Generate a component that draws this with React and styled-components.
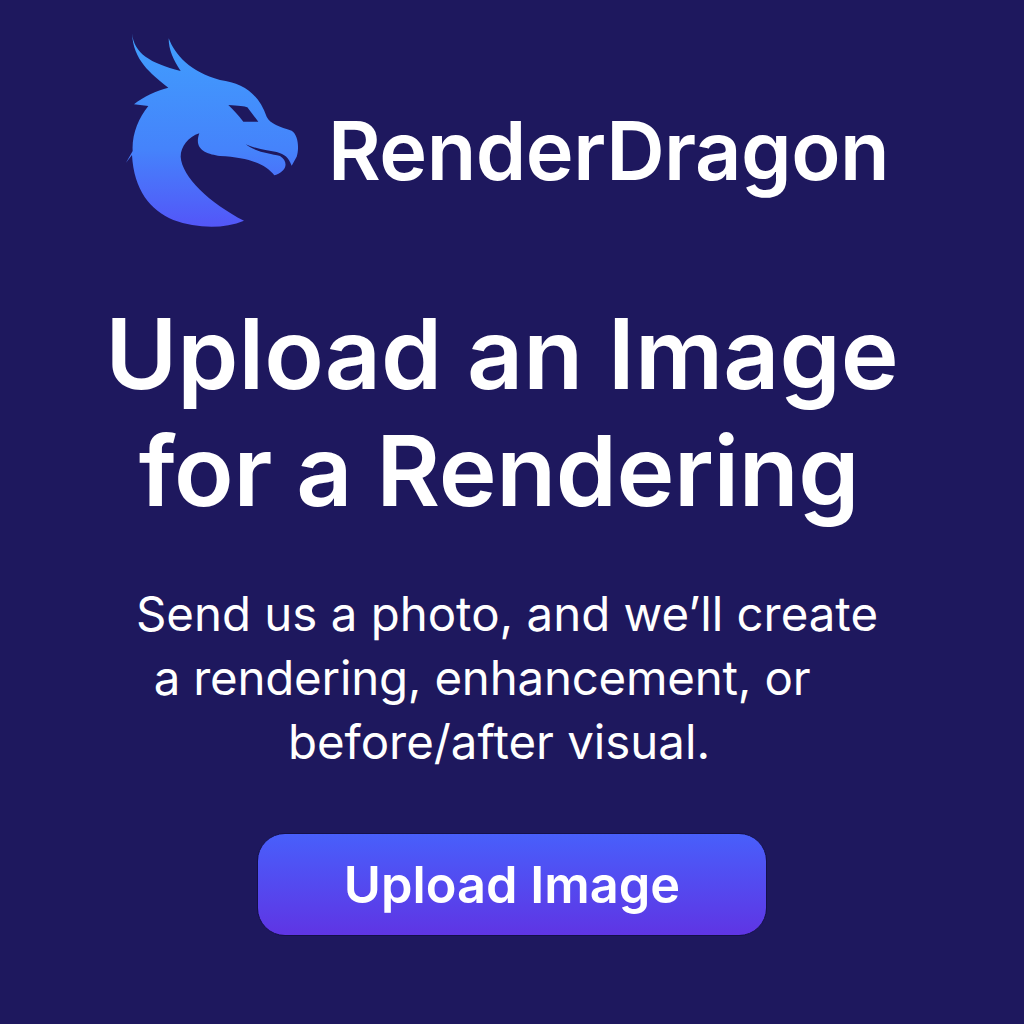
import React from 'react';
import styled, { createGlobalStyle } from 'styled-components';

const GlobalStyle = createGlobalStyle`
  html, body {
    margin: 0;
    background: #1e185e;
  }
`;

const Page = styled.main`
  align-items: center;
  background: #1e185e;
  color: #ffffff;
  display: flex;
  flex-direction: column;
  font-family: Inter, "Liberation Sans", sans-serif;
  height: 1024px;
  overflow: hidden;
  width: 1024px;
`;

const Brand = styled.header`
  align-items: center;
  align-self: flex-start;
  display: flex;
  gap: 8px;
  padding: 20px 0 0 110px;
`;

const BrandName = styled.span`
  font-size: 81px;
  font-weight: 600;
  letter-spacing: -0.5px;
  line-height: 90px;
  margin-top: 42px;
`;

const Heading = styled.h1`
  font-size: 98px;
  font-weight: 600;
  line-height: 117px;
  margin: 55px 0 0;
  text-align: center;
`;

const HeadingLine = styled.div`
  letter-spacing: ${props => props.$spacing || 0}px;
  margin-right: ${props => props.$shift}px;
`;

const Intro = styled.div`
  font-size: 47.4px;
  font-weight: 400;
  line-height: 64px;
  margin-top: 53px;
  text-align: center;
`;

const IntroLine = styled.div`
  letter-spacing: ${props => props.$spacing || 0}px;
  margin-right: ${props => props.$shift}px;
`;

const UploadButton = styled.button`
  background: linear-gradient(180deg, #485ffb 0%, #5f35e4 100%);
  border: 1px solid #14104a;
  border-radius: 28px;
  color: #ffffff;
  font-family: inherit;
  font-size: 50.5px;
  font-weight: 600;
  height: 103px;
  margin-top: 59px;
  width: 510px;
`;

const Logo = () => (
  <svg width="210" height="220" viewBox="0 0 630 660">
    <defs>
      <linearGradient id="dragonFill" x1="0" y1="0" x2="0" y2="1">
        <stop offset="0" stopColor="#409ffd" />
        <stop offset="0.6" stopColor="#4583fb" />
        <stop offset="1" stopColor="#5356f8" />
      </linearGradient>
    </defs>
    <path
      fill="url(#dragonFill)"
      fillRule="evenodd"
      d="M66 40 C72 100 120 130 212 153 C190 120 176 90 176 55 C195 105 240 155 330 180 C400 190 445 220 470 290 C480 312 510 320 545 332 C565 345 568 385 560 410 L545 437 C535 412 525 403 500 396 C470 392 435 385 407 373 C440 398 480 400 510 408 C530 420 530 440 520 450 C510 460 500 464 493 466 C470 435 420 412 330 408 C290 402 250 390 268 340 C235 350 212 380 212 410 C215 470 300 550 402 602 C340 628 260 625 190 600 C120 570 72 510 66 405 L48 428 L68 393 C65 345 85 295 115 258 L72 253 C100 230 140 212 175 203 C120 160 70 120 66 40 Z M355 255 C385 258 405 258 412 262 L445 305 L400 305 C385 285 370 270 355 255 Z"
    />
  </svg>
);

const App = () => (
  <Page>
    <GlobalStyle />
    <Brand>
      <Logo />
      <BrandName>RenderDragon</BrandName>
    </Brand>
    <Heading>
      <HeadingLine $shift={20}>Upload an Image</HeadingLine>
      <HeadingLine $shift={26} $spacing={-0.4}>for a Rendering</HeadingLine>
    </Heading>
    <Intro>
      <IntroLine $shift={10}>Send us a photo, and we’ll create</IntroLine>
      <IntroLine $shift={60} $spacing={-0.2}>a rendering, enhancement, or</IntroLine>
      <IntroLine $shift={26}>before/after visual.</IntroLine>
    </Intro>
    <UploadButton>Upload Image</UploadButton>
  </Page>
);

export default App;
